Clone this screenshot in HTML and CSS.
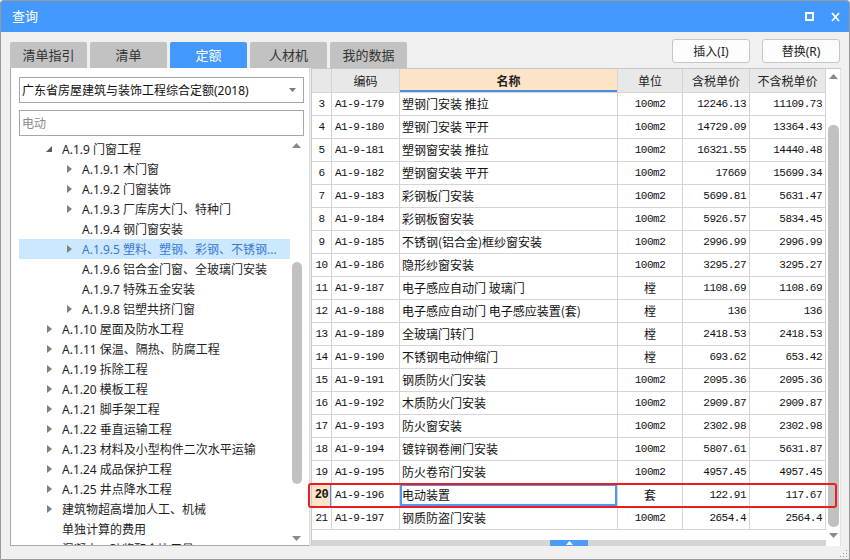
FILE: index.html
```html
<!DOCTYPE html>
<html lang="zh">
<head>
<meta charset="utf-8">
<title>查询</title>
<link rel="stylesheet" href="styles.css">
</head>
<body>
<div class="window">
  <div class="titlebar">
    <span class="title">查询</span>
    <div class="winbtns">
      <svg class="wicon" width="9" height="9" viewBox="0 0 9 9"><rect x="1" y="1" width="7" height="7" fill="none" stroke="#fff" stroke-width="2"/></svg>
      <svg class="wicon" width="9" height="10" viewBox="0 0 9 10"><path d="M1 1 L8 9 M8 1 L1 9" stroke="#fff" stroke-width="1.8" fill="none"/></svg>
    </div>
  </div>

  <div class="toolbar">
    <div class="tabs">
      <div class="tab">清单指引</div>
      <div class="tab">清单</div>
      <div class="tab active">定额</div>
      <div class="tab">人材机</div>
      <div class="tab">我的数据</div>
    </div>
    <div class="actions">
      <button class="btn">插入(I)</button>
      <button class="btn">替换(R)</button>
    </div>
  </div>

  <div class="main">
    <div class="left">
      <div class="select">
        <span class="select-text">广东省房屋建筑与装饰工程综合定额(2018)</span>
        <svg class="caret" width="7" height="4" viewBox="0 0 7 4"><path d="M0 0 H7 L3.5 4 Z" fill="#7a7a7a"/></svg>
      </div>
      <div class="search">电动</div>
      <div class="tree">
        <div class="tree-list">
          <div class="node"><span class="arrow open"></span><span>A.1.9 门窗工程</span></div>
          <div class="node l2"><span class="arrow closed"></span><span>A.1.9.1 木门窗</span></div>
          <div class="node l2"><span class="arrow closed"></span><span>A.1.9.2 门窗装饰</span></div>
          <div class="node l2"><span class="arrow closed"></span><span>A.1.9.3 厂库房大门、特种门</span></div>
          <div class="node l2"><span class="arrow"></span><span>A.1.9.4 钢门窗安装</span></div>
          <div class="node l2 selected"><span class="arrow closed"></span><span>A.1.9.5 塑料、塑钢、彩钢、不锈钢...</span></div>
          <div class="node l2"><span class="arrow"></span><span>A.1.9.6 铝合金门窗、全玻璃门安装</span></div>
          <div class="node l2"><span class="arrow"></span><span>A.1.9.7 特殊五金安装</span></div>
          <div class="node l2"><span class="arrow closed"></span><span>A.1.9.8 铝塑共挤门窗</span></div>
          <div class="node"><span class="arrow closed"></span><span>A.1.10 屋面及防水工程</span></div>
          <div class="node"><span class="arrow closed"></span><span>A.1.11 保温、隔热、防腐工程</span></div>
          <div class="node"><span class="arrow closed"></span><span>A.1.19 拆除工程</span></div>
          <div class="node"><span class="arrow closed"></span><span>A.1.20 模板工程</span></div>
          <div class="node"><span class="arrow closed"></span><span>A.1.21 脚手架工程</span></div>
          <div class="node"><span class="arrow closed"></span><span>A.1.22 垂直运输工程</span></div>
          <div class="node"><span class="arrow closed"></span><span>A.1.23 材料及小型构件二次水平运输</span></div>
          <div class="node"><span class="arrow closed"></span><span>A.1.24 成品保护工程</span></div>
          <div class="node"><span class="arrow closed"></span><span>A.1.25 井点降水工程</span></div>
          <div class="node"><span class="arrow closed"></span><span>建筑物超高增加人工、机械</span></div>
          <div class="node"><span class="arrow"></span><span>单独计算的费用</span></div>
          <div class="node"><span class="arrow"></span><span>混凝土、砂浆配合比用量</span></div>
        </div>
        <div class="vscroll tree-scroll">
          <svg class="sarrow up" width="9" height="5" viewBox="0 0 9 5"><path d="M0 5 L4.5 0 L9 5 Z" fill="#8a8a8a"/></svg>
          <div class="thumb"></div>
          <svg class="sarrow down" width="9" height="5" viewBox="0 0 9 5"><path d="M0 0 L4.5 5 L9 0 Z" fill="#8a8a8a"/></svg>
        </div>
      </div>
    </div>

    <div class="right">
      <div class="gridcol">
        <div class="row head">
          <div></div>
          <div class="c">编码</div>
          <div class="c name-head">名称</div>
          <div class="c">单位</div>
          <div class="c">含税单价</div>
          <div class="c">不含税单价</div>
        </div>
        <div class="row"><div class="num">3</div><div class="code">A1-9-179</div><div class="name">塑钢门安装 推拉</div><div class="unit">100m2</div><div class="price">12246.13</div><div class="price">11109.73</div></div>
        <div class="row"><div class="num">4</div><div class="code">A1-9-180</div><div class="name">塑钢门安装 平开</div><div class="unit">100m2</div><div class="price">14729.09</div><div class="price">13364.43</div></div>
        <div class="row"><div class="num">5</div><div class="code">A1-9-181</div><div class="name">塑钢窗安装 推拉</div><div class="unit">100m2</div><div class="price">16321.55</div><div class="price">14440.48</div></div>
        <div class="row"><div class="num">6</div><div class="code">A1-9-182</div><div class="name">塑钢窗安装 平开</div><div class="unit">100m2</div><div class="price">17669</div><div class="price">15699.34</div></div>
        <div class="row"><div class="num">7</div><div class="code">A1-9-183</div><div class="name">彩钢板门安装</div><div class="unit">100m2</div><div class="price">5699.81</div><div class="price">5631.47</div></div>
        <div class="row"><div class="num">8</div><div class="code">A1-9-184</div><div class="name">彩钢板窗安装</div><div class="unit">100m2</div><div class="price">5926.57</div><div class="price">5834.45</div></div>
        <div class="row"><div class="num">9</div><div class="code">A1-9-185</div><div class="name">不锈钢(铝合金)框纱窗安装</div><div class="unit">100m2</div><div class="price">2996.99</div><div class="price">2996.99</div></div>
        <div class="row"><div class="num">10</div><div class="code">A1-9-186</div><div class="name">隐形纱窗安装</div><div class="unit">100m2</div><div class="price">3295.27</div><div class="price">3295.27</div></div>
        <div class="row"><div class="num">11</div><div class="code">A1-9-187</div><div class="name">电子感应自动门 玻璃门</div><div class="unit cjk">樘</div><div class="price">1108.69</div><div class="price">1108.69</div></div>
        <div class="row"><div class="num">12</div><div class="code">A1-9-188</div><div class="name">电子感应自动门 电子感应装置(套)</div><div class="unit cjk">樘</div><div class="price">136</div><div class="price">136</div></div>
        <div class="row"><div class="num">13</div><div class="code">A1-9-189</div><div class="name">全玻璃门转门</div><div class="unit cjk">樘</div><div class="price">2418.53</div><div class="price">2418.53</div></div>
        <div class="row"><div class="num">14</div><div class="code">A1-9-190</div><div class="name">不锈钢电动伸缩门</div><div class="unit cjk">樘</div><div class="price">693.62</div><div class="price">653.42</div></div>
        <div class="row"><div class="num">15</div><div class="code">A1-9-191</div><div class="name">钢质防火门安装</div><div class="unit">100m2</div><div class="price">2095.36</div><div class="price">2095.36</div></div>
        <div class="row"><div class="num">16</div><div class="code">A1-9-192</div><div class="name">木质防火门安装</div><div class="unit">100m2</div><div class="price">2909.87</div><div class="price">2909.87</div></div>
        <div class="row"><div class="num">17</div><div class="code">A1-9-193</div><div class="name">防火窗安装</div><div class="unit">100m2</div><div class="price">2302.98</div><div class="price">2302.98</div></div>
        <div class="row"><div class="num">18</div><div class="code">A1-9-194</div><div class="name">镀锌钢卷闸门安装</div><div class="unit">100m2</div><div class="price">5807.61</div><div class="price">5631.87</div></div>
        <div class="row"><div class="num">19</div><div class="code">A1-9-195</div><div class="name">防火卷帘门安装</div><div class="unit">100m2</div><div class="price">4957.45</div><div class="price">4957.45</div></div>
        <div class="row current"><div class="num">20</div><div class="code">A1-9-196</div><div class="name">电动装置</div><div class="unit cjk">套</div><div class="price">122.91</div><div class="price">117.67</div></div>
        <div class="row"><div class="num">21</div><div class="code">A1-9-197</div><div class="name">钢质防盗门安装</div><div class="unit">100m2</div><div class="price">2654.4</div><div class="price">2564.4</div></div>
        <div class="filler"></div>
        <div class="hsplit"><span class="handle"><svg width="7" height="4" viewBox="0 0 7 4"><path d="M0 4 L3.5 0 L7 4 Z" fill="#fff"/></svg></span></div>
      </div>
      <div class="vscroll grid-scroll">
        <svg class="sarrow up" width="9" height="5" viewBox="0 0 9 5"><path d="M0 5 L4.5 0 L9 5 Z" fill="#8a8a8a"/></svg>
        <div class="thumb"></div>
        <svg class="sarrow down" width="9" height="5" viewBox="0 0 9 5"><path d="M0 0 L4.5 5 L9 0 Z" fill="#8a8a8a"/></svg>
      </div>
      <div class="redbox"></div>
    </div>
  </div>

  <div class="footer">
    <svg class="grip" width="8" height="8" viewBox="0 0 8 8">
      <rect x="6" y="0" width="1" height="1" fill="#9a9a9a"/>
      <rect x="3" y="3" width="1" height="1" fill="#9a9a9a"/>
      <rect x="6" y="3" width="1" height="1" fill="#9a9a9a"/>
      <rect x="0" y="6" width="1" height="1" fill="#9a9a9a"/>
      <rect x="3" y="6" width="1" height="1" fill="#9a9a9a"/>
      <rect x="6" y="6" width="1" height="1" fill="#9a9a9a"/>
    </svg>
  </div>
</div>
</body>
</html>
```
FILE: styles.css
```css
* { box-sizing: border-box; margin: 0; padding: 0; }

body {
  margin: 0;
  background: #ffffff;
  font-family: "Noto Sans", "Noto Sans CJK SC", sans-serif;
  font-size: 12px;
  color: #1e1e1e;
}

.window {
  width: 850px;
  height: 560px;
  border: 1px solid #9a9a9a;
  border-radius: 3px 3px 0 0;
  background: #f0f0f0;
  display: flex;
  flex-direction: column;
  overflow: hidden;
}

/* title bar */
.titlebar {
  flex: none;
  height: 31px;
  background: #4399fd;
  color: #fff;
  display: flex;
  align-items: center;
  justify-content: space-between;
  padding: 0 9px 0 11px;
}
.title { font-size: 13px; line-height: 31px; }
.winbtns { display: flex; align-items: center; gap: 17px; }
.wicon { display: block; }

/* toolbar with tabs */
.toolbar {
  flex: none;
  height: 36px;
  display: flex;
  justify-content: space-between;
  padding: 0 9px;
}
.tabs { display: flex; gap: 3px; align-self: flex-end; }
.tab {
  width: 77px;
  height: 26px;
  background: #c2c2c2;
  border-radius: 2px 2px 0 0;
  text-align: center;
  line-height: 26px;
  font-family: "Noto Sans CJK SC", sans-serif;
  font-size: 13px;
  color: #333;
}
.tab.active { background: #4399fd; color: #fff; }

.actions { display: flex; gap: 12px; margin-top: 7px; align-self: flex-start; }
.btn {
  width: 78px;
  height: 24px;
  border: 1px solid #c6c6c6;
  border-radius: 3px;
  background: #fdfdfd;
  font-family: "Noto Sans", "Noto Sans CJK SC", sans-serif;
  font-size: 12px;
  color: #222;
}

/* main area */
.main {
  flex: none;
  height: 478px;
  display: flex;
  padding-left: 9px;
}

.left {
  width: 300px;
  background: #fff;
  border-left: 1px solid #a9a9a9;
  border-bottom: 1px solid #a9a9a9;
  border-right: 1px solid #dadada;
  padding: 9px 5px 0 8px;
  display: flex;
  flex-direction: column;
}
.select {
  flex: none;
  height: 26px;
  border: 1px solid #a6a6a6;
  display: flex;
  align-items: center;
  justify-content: space-between;
  padding: 0 7px 0 2px;
  color: #111;
}
.search {
  flex: none;
  margin-top: 7px;
  height: 26px;
  border: 1px solid #a6a6a6;
  padding-left: 2px;
  line-height: 24px;
  color: #8a8a8a;
  font-family: "Noto Sans CJK SC", sans-serif;
}
.tree {
  flex: 1;
  margin-top: 3px;
  display: flex;
  overflow: hidden;
}
.tree-list { flex: 1; overflow: hidden; }
.node {
  height: 20px;
  display: flex;
  align-items: center;
  padding-left: 26px;
  white-space: nowrap;
  color: #1e1e1e;
}
.node.l2 { padding-left: 46px; }
.node.selected { background: #cce8ff; color: #3a78d6; }
.arrow { width: 17px; flex: none; height: 20px; position: relative; }
.arrow.closed::before {
  content: "";
  position: absolute;
  left: 2px;
  top: 6px;
  border-left: 5px solid #808080;
  border-top: 4px solid transparent;
  border-bottom: 4px solid transparent;
}
.arrow.open::before {
  content: "";
  position: absolute;
  left: 1px;
  top: 7px;
  border-right: 6px solid #5a5a5a;
  border-top: 6px solid transparent;
}

.vscroll { flex: none; background: #fff; position: relative; }
.tree-scroll { width: 14px; }
.tree-scroll .thumb {
  position: absolute;
  left: 2px;
  top: 123px;
  width: 10px;
  height: 222px;
  border-radius: 5px;
  background: #c1c1c1;
}
.sarrow { position: absolute; left: 2px; display: block; }
.tree-scroll .up { top: 4px; }
.tree-scroll .down { bottom: 4px; }

/* right grid panel */
.right {
  width: 530px;
  margin-left: 1px;
  background: #fff;
  border-top: 1px solid #c9c9c9;
  display: flex;
  position: relative;
}
.gridcol {
  width: 515px;
  flex: none;
  display: flex;
  flex-direction: column;
  border-left: 1px solid #c9c9c9;
}
.row {
  flex: none;
  display: grid;
  grid-template-columns: 20px 68px 218px 65px 67px 76px;
  height: 23px;
  border-bottom: 1px solid #d4d4d4;
}
.row > div {
  border-right: 1px solid #d4d4d4;
  line-height: 22px;
  white-space: nowrap;
  overflow: hidden;
}
.row.head { height: 24px; background: #e8e8e8; }
.row.head > div {
  line-height: 23px;
  font-family: "Noto Sans CJK SC", sans-serif;
  font-size: 12px;
  color: #222;
}
.row.head .c { text-align: center; }
.row.head .name-head {
  background: #fde4c6;
  font-weight: bold;
  box-shadow: inset 0 -2px 0 #4a90e2;
}

.num, .code, .unit, .price {
  font-family: "Liberation Mono", monospace;
  font-size: 11px;
  letter-spacing: -0.5px;
  color: #111;
}
.num { text-align: center; }
.code { padding-left: 3px; }
.name {
  padding-left: 2px;
  font-family: "Noto Sans CJK SC", sans-serif;
  font-size: 12px;
  color: #111;
}
.unit { text-align: center; }
.unit.cjk { font-family: "Noto Sans CJK SC", sans-serif; font-size: 12px; letter-spacing: 0; }
.price { text-align: right; padding-right: 3px; }

.row.current .num {
  background: #fde4c6;
  font-weight: bold;
  font-size: 12px;
  box-shadow: inset -1px 0 0 #4a90e2;
}
.row.current .name { box-shadow: inset 0 0 0 2px #4a9af5; }

.filler { flex: 1; }
.hsplit {
  flex: none;
  height: 6px;
  background: #d5d5d5;
  display: flex;
  justify-content: center;
}
.handle {
  width: 38px;
  height: 6px;
  background: #4c9bf5;
  display: flex;
  align-items: center;
  justify-content: center;
}
.handle svg { display: block; }

.grid-scroll { width: 15px; border-right: 1px solid #e2e2e2; }
.grid-scroll .thumb {
  position: absolute;
  left: 2px;
  top: 56px;
  width: 11px;
  height: 402px;
  border-radius: 5px;
  background: #c1c1c1;
}
.grid-scroll .up { top: 5px; left: 3px; }
.grid-scroll .down { top: 464px; left: 3px; }

.redbox {
  position: absolute;
  left: -3px;
  top: 414px;
  width: 529px;
  height: 25px;
  border: 2px solid #ee1c1c;
  border-radius: 3px;
  pointer-events: none;
}

/* footer */
.footer { flex: 1; position: relative; }
.grip { position: absolute; right: 1px; bottom: 1px; display: block; }
```
